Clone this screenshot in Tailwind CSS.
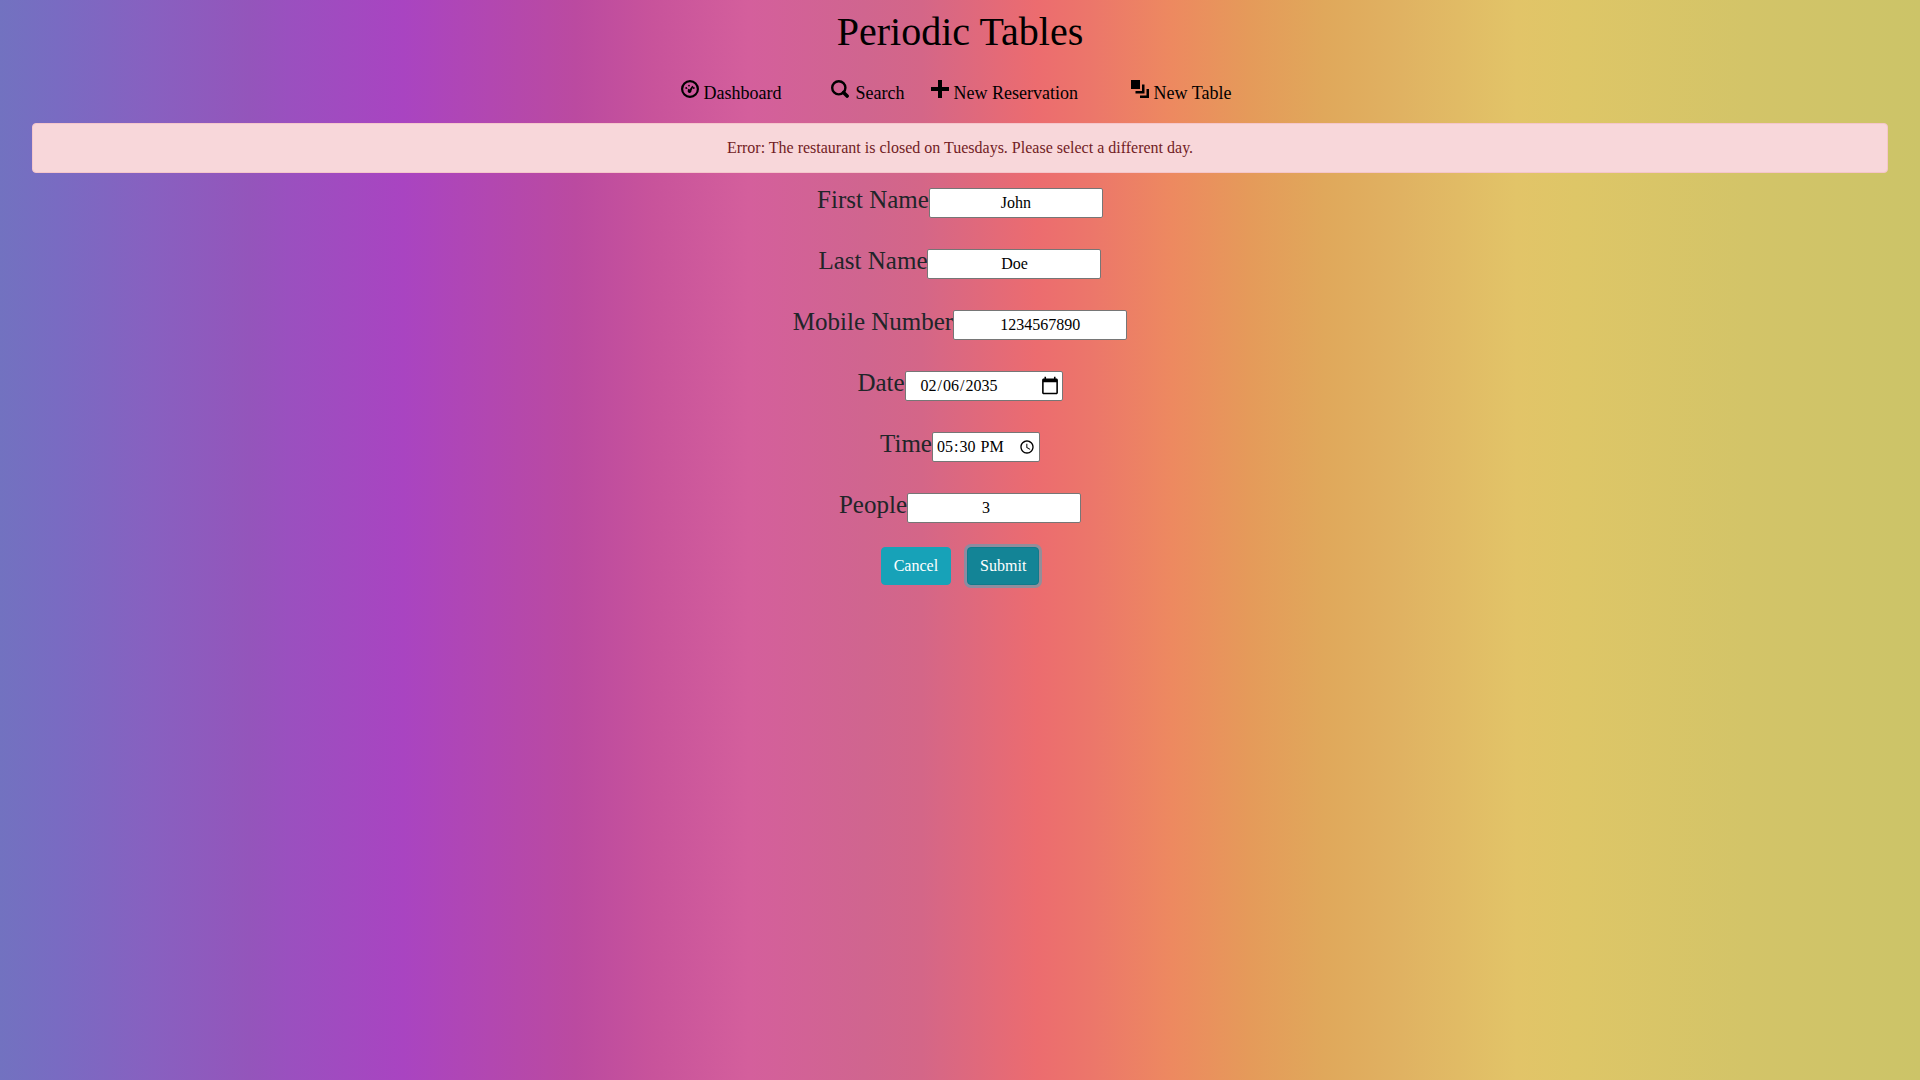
<!DOCTYPE html>
<html lang="en">
<head>
<meta charset="utf-8">
<meta name="viewport" content="width=device-width, initial-scale=1">
<title>Periodic Tables</title>
<script src="https://cdn.jsdelivr.net/npm/@tailwindcss/browser@4"></script>
</head>
<body class="min-h-screen bg-[linear-gradient(to_right,#7272c0_0%,#796bc2_3%,#8860c0_8%,#9455bb_13%,#9a50bf_15%,#a944c1_21%,#bb4aa0_30%,#c8539b_34%,#d45f9c_39%,#d0658f_45%,#d46688_48%,#ec6c6f_54%,#ec776a_57%,#ed8960_61%,#e59a5a_65%,#e0a85b_69%,#e0b262_73%,#e2c468_79%,#dec667_82%,#d3c468_91%,#ccc468_100%)] font-['Liberation_Serif',serif] text-base text-[#212529]">
<header class="text-black">
  <h1 class="pt-2 text-center text-[40px] leading-[48px]">Periodic Tables</h1>
  <nav class="flex justify-center pt-6 pr-2 pb-4 text-lg leading-[27px]">
    <a href="#dashboard" class="flex w-[150px] gap-[5px]">
      <svg class="h-[18px] w-[18px]" viewBox="0 0 18 18" fill="none"><circle cx="9" cy="9" r="7.9" stroke="currentColor" stroke-width="2.2"/><g fill="currentColor"><circle cx="5.200" cy="8" r="0.900"/><circle cx="8" cy="5.600" r="0.900"/><circle cx="12.800" cy="8" r="0.900"/><path d="M6 8.300l2.600 1.200 2.600-3.700 1.200.8-2 4.200a1.900 1.900 0 1 1-3.200-1z"/></g></svg>
      <span>Dashboard</span>
    </a>
    <a href="#search" class="flex w-[100px] gap-[7px]">
      <svg class="h-[18px] w-[18px]" viewBox="0 0 18 18" fill="none" stroke="currentColor"><circle cx="7.800" cy="7.800" r="6.600" stroke-width="2.400"/><path d="M12.500 12.500l3.600 3.600" stroke-width="3.600" stroke-linecap="round"/></svg>
      <span>Search</span>
    </a>
    <a href="#new-reservation" class="flex w-[200px] gap-[5px]">
      <svg class="h-[18px] w-[18px]" viewBox="0 0 18 18" fill="currentColor"><path d="M7 0h4v7h7v4h-7v7H7v-7H0V7h7z"/></svg>
      <span>New Reservation</span>
    </a>
    <a href="#new-table" class="flex gap-[5px]">
      <svg class="h-[18px] w-[18px]" viewBox="0 0 18 18" fill="currentColor"><path d="M0 0h9v9H0zM11 4.500h2.500v9H4.500V11H11zM15.500 9H18v9H9v-2.500h6.500z"/></svg>
      <span>New Table</span>
    </a>
  </nav>
</header>
<main class="px-8">
  <div role="alert" class="rounded border border-[#f5c6cb] bg-[#f8d7da] px-5 py-3 text-center text-[#721c24]">Error: The restaurant is closed on Tuesdays. Please select a different day.</div>
  <form class="pt-3 text-[25px] leading-[30px]">
    <div class="flex flex-col gap-7">
      <div class="flex items-baseline justify-center"><label for="first">First Name</label><input id="first" type="text" value="John" class="h-[30px] w-[174px] rounded-[2px] border border-[#767676] bg-white text-center text-base text-black"></div>
      <div class="flex items-baseline justify-center"><label for="last">Last Name</label><input id="last" type="text" value="Doe" class="h-[30px] w-[174px] rounded-[2px] border border-[#767676] bg-white text-center text-base text-black"></div>
      <div class="flex items-baseline justify-center"><label for="mobile">Mobile Number</label><input id="mobile" type="tel" value="1234567890" class="h-[30px] w-[174px] rounded-[2px] border border-[#767676] bg-white text-center text-base text-black"></div>
      <div class="flex items-baseline justify-center"><label for="date">Date</label><input id="date" type="date" value="2035-02-06" class="h-[30px] w-[158px] rounded-[2px] border border-[#767676] bg-white pr-0.5 pl-3.5 text-base text-black [&::-webkit-calendar-picker-indicator]:h-5 [&::-webkit-calendar-picker-indicator]:w-5 [&::-webkit-calendar-picker-indicator]:p-0"></div>
      <div class="flex items-baseline justify-center"><label for="time">Time</label><input id="time" type="time" value="17:30" class="h-[30px] w-[108px] rounded-[2px] border border-[#767676] bg-white pr-0 pl-[3px] text-base text-black"></div>
      <div class="flex items-baseline justify-center"><label for="people">People</label><input id="people" type="text" inputmode="numeric" value="3" class="h-[30px] w-[174px] rounded-[2px] border border-[#767676] bg-white pr-4 text-center text-base text-black"></div>
    </div>
    <div class="flex justify-center gap-4 pt-6 text-base">
      <button type="button" class="rounded border border-[#17a2b8] bg-[#17a2b8] px-3 py-1.5 text-white">Cancel</button>
      <button type="submit" class="rounded border border-[#117a8b] bg-[#138496] px-3 py-1.5 text-white shadow-[0_0_0_3px_rgba(58,176,195,0.5)]">Submit</button>
    </div>
  </form>
</main>
</body>
</html>
